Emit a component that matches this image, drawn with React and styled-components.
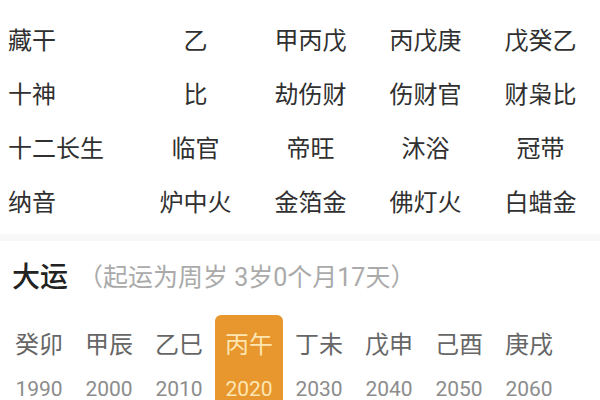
import React from "react";
import styled, { createGlobalStyle } from "styled-components";

const GlobalStyle = createGlobalStyle`
  html, body {
    margin: 0;
    padding: 0;
    background: #ffffff;
  }
  body {
    font-family: "Noto Sans CJK SC", "Noto Sans", sans-serif;
  }
`;

const rows = [
  { label: "藏干", cells: ["乙", "甲丙戊", "丙戊庚", "戊癸乙"] },
  { label: "十神", cells: ["比", "劫伤财", "伤财官", "财枭比"] },
  { label: "十二长生", cells: ["临官", "帝旺", "沐浴", "冠带"] },
  { label: "纳音", cells: ["炉中火", "金箔金", "佛灯火", "白蜡金"] },
];

const luck = [
  { gz: "癸卯", year: 1990 },
  { gz: "甲辰", year: 2000 },
  { gz: "乙巳", year: 2010 },
  { gz: "丙午", year: 2020, current: true },
  { gz: "丁未", year: 2030 },
  { gz: "戊申", year: 2040 },
  { gz: "己酉", year: 2050 },
  { gz: "庚戌", year: 2060 },
];

function App() {
  return (
    <Page>
      <GlobalStyle />
      <Table>
        {rows.map((row) => (
          <Row key={row.label}>
            <Label>{row.label}</Label>
            {row.cells.map((c, i) => (
              <Cell key={i}>{c}</Cell>
            ))}
          </Row>
        ))}
      </Table>
      <Divider />
      <Section>
        <Header>
          <Title>大运</Title>
          <Sub>（起运为周岁 3岁0个月17天）</Sub>
        </Header>
        <LuckList>
          {luck.map((item) => (
            <LuckItem key={item.year} $active={item.current}>
              <GanZhi $active={item.current}>{item.gz}</GanZhi>
              <Year $active={item.current}>{item.year}</Year>
            </LuckItem>
          ))}
        </LuckList>
      </Section>
    </Page>
  );
}

const Page = styled.div`
  width: 600px;
  height: 400px;
  overflow: hidden;
  background: #ffffff;
`;

const Table = styled.div`
  padding-top: 12px;
`;

const Row = styled.div`
  display: grid;
  grid-template-columns: 138px repeat(4, 115px);
  height: 54px;
  align-items: center;
`;

const Label = styled.span`
  padding-left: 8px;
  font-size: 24px;
  line-height: 30px;
  color: #303030;
`;

const Cell = styled.span`
  text-align: center;
  font-size: 24px;
  line-height: 30px;
  color: #303030;
`;

const Divider = styled.div`
  margin-top: 6px;
  height: 7px;
  background: #f8f8f8;
`;

const Section = styled.div`
  padding-top: 17px;
`;

const Header = styled.div`
  display: flex;
  align-items: center;
  height: 34px;
  padding-left: 12px;
`;

const Title = styled.span`
  font-size: 28px;
  line-height: 34px;
  font-weight: 500;
  color: #222222;
`;

const Sub = styled.span`
  margin-left: 10px;
  font-family: "Roboto", "Noto Sans CJK SC", sans-serif;
  font-size: 25px;
  color: #aaaaaa;
`;

const LuckList = styled.div`
  display: flex;
  margin-top: 23px;
  padding-left: 4px;
`;

const LuckItem = styled.div`
  width: 68px;
  margin: 0 1px;
  display: flex;
  flex-direction: column;
  align-items: center;
  padding-top: 14px;
  height: 100px;
  box-sizing: border-box;
  border-radius: 6px;
  background: ${(p) => (p.$active ? "#e8962e" : "transparent")};
`;

const GanZhi = styled.span`
  font-size: 24px;
  line-height: 28px;
  color: ${(p) => (p.$active ? "#fde6b2" : "#666666")};
`;

const Year = styled.span`
  margin-top: 20px;
  font-family: "Roboto", "Noto Sans", sans-serif;
  font-size: 21px;
  line-height: 24px;
  color: ${(p) => (p.$active ? "#fde6b2" : "#8c8c8c")};
`;

export default App;
